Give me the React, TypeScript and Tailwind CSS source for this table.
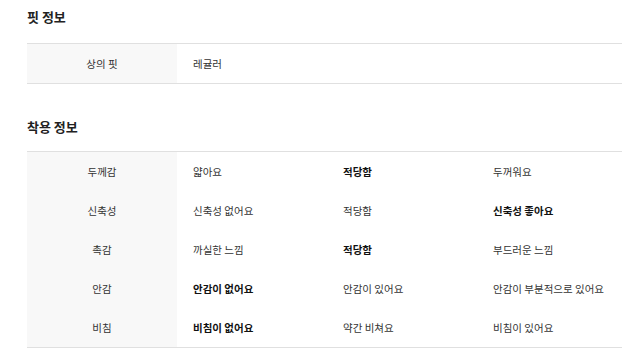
const fitRows = [{ label: "상의 핏", value: "레귤러" }]

const wearRows = [
  { label: "두께감", options: ["얇아요", "적당함", "두꺼워요"], selected: 1 },
  { label: "신축성", options: ["신축성 없어요", "적당함", "신축성 좋아요"], selected: 2 },
  { label: "촉감", options: ["까실한 느낌", "적당함", "부드러운 느낌"], selected: 1 },
  { label: "안감", options: ["안감이 없어요", "안감이 있어요", "안감이 부분적으로 있어요"], selected: 0 },
  { label: "비침", options: ["비침이 없어요", "약간 비쳐요", "비침이 있어요"], selected: 0 },
]

export default function App() {
  return (
    <div
      className="bg-white pl-[27px] pt-[7px] text-[#222]"
      style={{ fontFamily: '"Noto Sans CJK KR", "Noto Sans", sans-serif' }}
    >
      <section>
        <h2 className="text-[13px] font-bold leading-[20px]">핏 정보</h2>
        <div className="mt-[16px] border-y border-[#e0e0e0]">
          {fitRows.map((row) => (
            <div key={row.label} className="grid grid-cols-[150px_1fr] h-[39px] text-[10.5px]">
              <div className="bg-[#f8f8f8] flex items-center justify-center text-[#333]">{row.label}</div>
              <div className="flex items-center pl-[16px] text-[#333]">{row.value}</div>
            </div>
          ))}
        </div>
      </section>

      <section className="mt-[33px]">
        <h2 className="text-[13px] font-bold leading-[20px]">착용 정보</h2>
        <div className="mt-[14px] border-y border-[#e0e0e0]">
          {wearRows.map((row) => (
            <div key={row.label} className="grid grid-cols-[150px_150px_150px_1fr] h-[39px] text-[10.5px]">
              <div className="bg-[#f8f8f8] flex items-center justify-center text-[#333]">{row.label}</div>
              {row.options.map((opt, i) => (
                <div
                  key={opt + i}
                  className={
                    i === row.selected
                      ? "flex items-center pl-[16px] font-bold text-[#111]"
                      : "flex items-center pl-[16px] text-[#333]"
                  }
                >
                  {opt}
                </div>
              ))}
            </div>
          ))}
        </div>
      </section>
    </div>
  )
}
